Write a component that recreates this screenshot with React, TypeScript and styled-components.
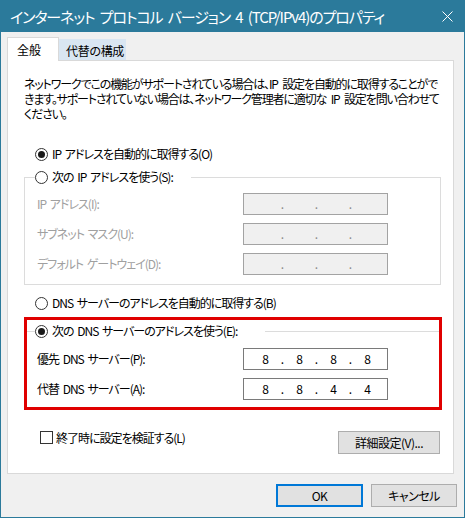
import React from "react";
import styled, { createGlobalStyle } from "styled-components";

const GlobalStyle = createGlobalStyle`
  html, body { margin: 0; padding: 0; background: #ffffff; }
  body {
    font-family: "Noto Sans CJK JP", "Noto Sans", sans-serif;
    font-feature-settings: "palt";
  }
  * { box-sizing: border-box; }
`;

const BLUE = "#2b7a9b";

const Window = styled.div`
  width: 465px;
  height: 518px;
  border: 1px solid ${BLUE};
  border-top: none;
  display: flex;
  flex-direction: column;
  background: #f0f0f0;
`;

const TitleBar = styled.div`
  height: 32px;
  flex: none;
  background: ${BLUE};
  color: #ffffff;
  display: flex;
  align-items: center;
  justify-content: space-between;
  padding-left: 9px;
  font-size: 15px;
  letter-spacing: -1.1px;
  word-spacing: 3px;
  white-space: nowrap;
`;

const CloseBox = styled.div`
  width: 22px;
  height: 32px;
  display: flex;
  align-items: center;
  justify-content: flex-start;
`;

const Body = styled.div`
  flex: 1;
  display: flex;
  flex-direction: column;
  padding: 5px 10px 0 6px;
  font-size: 12px;
  letter-spacing: -1px;
  word-spacing: 2px;
  color: #000;
`;

const TabStrip = styled.div`
  display: flex;
  align-items: flex-end;
  margin-bottom: -1px;
  position: relative;
  z-index: 1;
`;

const Tab = styled.div<{ $active?: boolean }>`
  height: ${(p) => (p.$active ? 24 : 21)}px;
  margin-bottom: ${(p) => (p.$active ? 0 : 1)}px;
  padding: ${(p) => (p.$active ? "5px 0 0 9px" : "4px 0 0 6px")};
  width: ${(p) => (p.$active ? 52 : 67)}px;
  background: ${(p) => (p.$active ? "#ffffff" : "#d9e6f2")};
  border: 1px solid ${(p) => (p.$active ? "#d9d9d9" : "#d9e6f2")};
  border-bottom: none;
  font-size: 12px;
  line-height: 14px;
  white-space: nowrap;
  letter-spacing: ${(p) => (p.$active ? 0 : -0.3)}px;
`;

const Panel = styled.div`
  width: 447px;
  height: 414px;
  background: #ffffff;
  border: 1px solid #d9d9d9;
  padding: 15px 12px 0 16px;
  display: flex;
  flex-direction: column;
`;

const Description = styled.div`
  line-height: 15px;
  font-size: 12px;
  white-space: nowrap;
  letter-spacing: -1.15px;
  word-spacing: 3px;
`;

const RadioRow = styled.div<{ $top: number }>`
  display: flex;
  align-items: center;
  gap: 4px;
  height: 16px;
  margin-top: ${(p) => p.$top}px;
  margin-left: 11px;
`;

const RadioCircle = styled.span<{ $checked?: boolean }>`
  width: 13px;
  height: 13px;
  border-radius: 50%;
  border: 1px solid #333333;
  background: #ffffff;
  position: relative;
  flex: none;
  &::after {
    content: "";
    display: ${(p) => (p.$checked ? "block" : "none")};
    position: absolute;
    left: 2px;
    top: 2px;
    width: 7px;
    height: 7px;
    border-radius: 50%;
    background: #1a1a1a;
  }
`;

const Text = styled.span<{ $disabled?: boolean }>`
  color: ${(p) => (p.$disabled ? "#a0a0a0" : "#000000")};
  font-size: 12px;
  line-height: 16px;
  white-space: nowrap;
`;

const GroupBox = styled.fieldset<{ $top: number; $bottom: number }>`
  margin: ${(p) => p.$top}px 0 0 0;
  min-width: 0;
  width: 417px;
  border: 1px solid #dcdcdc;
  padding: 0 0 ${(p) => p.$bottom}px 12px;
`;

const Legend = styled.legend<{ $gap: number }>`
  margin-left: -2px;
  padding: 0 ${(p) => p.$gap}px 0 0;
  display: flex;
  align-items: center;
  gap: 4px;
  height: 16px;
`;

const FieldGrid = styled.div<{ $top: number }>`
  display: grid;
  grid-template-columns: 206px 145px;
  row-gap: 8px;
  align-items: center;
  padding-top: ${(p) => p.$top}px;
`;

const IpBox = styled.div<{ $disabled?: boolean }>`
  height: 22px;
  border: 1px solid ${(p) => (p.$disabled ? "#a3a3a3" : "#7a7a7a")};
  background: ${(p) => (p.$disabled ? "#f0f0f0" : "#ffffff")};
  display: flex;
  align-items: center;
  padding-left: 7px;
  color: ${(p) => (p.$disabled ? "#8a8a8a" : "#000000")};
  font-size: 12px;
  letter-spacing: 0;
`;

const IpSeg = styled.span`
  width: 29px;
  text-align: center;
  line-height: 16px;
`;

const IpDot = styled.span`
  width: 5px;
  text-align: center;
  line-height: 16px;
`;

const DnsWrap = styled.div`
  position: relative;
  margin-top: 12px;
`;

const Highlight = styled.div`
  position: absolute;
  left: 0;
  right: -1px;
  top: -6px;
  bottom: -2px;
  border: 3px solid #e00000;
  pointer-events: none;
`;

const BottomRow = styled.div`
  display: flex;
  align-items: flex-start;
  justify-content: space-between;
  margin-top: 23px;
  width: 416px;
`;

const CheckRow = styled.div`
  display: flex;
  align-items: center;
  gap: 3px;
  margin-left: 16px;
  height: 13px;
`;

const CheckSquare = styled.span`
  width: 13px;
  height: 13px;
  border: 1px solid #333333;
  background: #ffffff;
  flex: none;
`;

const Button = styled.div<{ $default?: boolean; $width: number }>`
  width: ${(p) => p.$width}px;
  height: 23px;
  background: #e1e1e1;
  border: ${(p) => (p.$default ? "2px solid #0078d7" : "1px solid #adadad")};
  display: flex;
  align-items: center;
  justify-content: center;
  font-size: 12px;
  letter-spacing: -0.5px;
`;

const DialogButtons = styled.div`
  display: flex;
  justify-content: flex-end;
  gap: 8px;
  margin-top: 10px;
  margin-right: -3px;
`;

function IpField({ values, disabled }: { values: string[]; disabled?: boolean }) {
  return (
    <IpBox $disabled={disabled}>
      {values.map((v, i) => (
        <React.Fragment key={i}>
          <IpSeg>{v}</IpSeg>
          {i < 3 && <IpDot>.</IpDot>}
        </React.Fragment>
      ))}
    </IpBox>
  );
}

export default function App() {
  const empty = ["", "", "", ""];
  return (
    <>
      <GlobalStyle />
      <Window>
        <TitleBar>
          <span>インターネット プロトコル バージョン 4 (TCP/IPv4)のプロパティ</span>
          <CloseBox>
            <svg width="11" height="11" viewBox="0 0 11 11">
              <path d="M0.5 0.5 L10.5 10.5 M10.5 0.5 L0.5 10.5" stroke="#ffffff" strokeWidth="1" fill="none" />
            </svg>
          </CloseBox>
        </TitleBar>
        <Body>
          <TabStrip>
            <Tab $active>全般</Tab>
            <Tab>代替の構成</Tab>
          </TabStrip>
          <Panel>
            <Description>
              ネットワークでこの機能がサポートされている場合は、IP 設定を自動的に取得することがで
              <br />
              きます。サポートされていない場合は、ネットワーク管理者に適切な IP 設定を問い合わせて
              <br />
              ください。
            </Description>

            <RadioRow $top={25}>
              <RadioCircle $checked />
              <Text>IP アドレスを自動的に取得する(O)</Text>
            </RadioRow>

            <GroupBox $top={7} $bottom={9}>
              <Legend $gap={18}>
                <RadioCircle />
                <Text>次の IP アドレスを使う(S):</Text>
              </Legend>
              <FieldGrid $top={8}>
                <Text $disabled>IP アドレス(I):</Text>
                <IpField values={empty} disabled />
                <Text $disabled>サブネット マスク(U):</Text>
                <IpField values={empty} disabled />
                <Text $disabled>デフォルト ゲートウェイ(D):</Text>
                <IpField values={empty} disabled />
              </FieldGrid>
            </GroupBox>

            <RadioRow $top={10}>
              <RadioCircle />
              <Text>DNS サーバーのアドレスを自動的に取得する(B)</Text>
            </RadioRow>

            <DnsWrap>
              <GroupBox $top={0} $bottom={7}>
                <Legend $gap={28}>
                  <RadioCircle $checked />
                  <Text>次の DNS サーバーのアドレスを使う(E):</Text>
                </Legend>
                <FieldGrid $top={9}>
                  <Text>優先 DNS サーバー(P):</Text>
                  <IpField values={["8", "8", "8", "8"]} />
                  <Text>代替 DNS サーバー(A):</Text>
                  <IpField values={["8", "8", "4", "4"]} />
                </FieldGrid>
              </GroupBox>
              <Highlight />
            </DnsWrap>

            <BottomRow>
              <CheckRow>
                <CheckSquare />
                <Text>終了時に設定を検証する(L)</Text>
              </CheckRow>
              <Button $width={102}>詳細設定(V)...</Button>
            </BottomRow>
          </Panel>
          <DialogButtons>
            <Button $default $width={87}>OK</Button>
            <Button $width={86}>キャンセル</Button>
          </DialogButtons>
        </Body>
      </Window>
    </>
  );
}
